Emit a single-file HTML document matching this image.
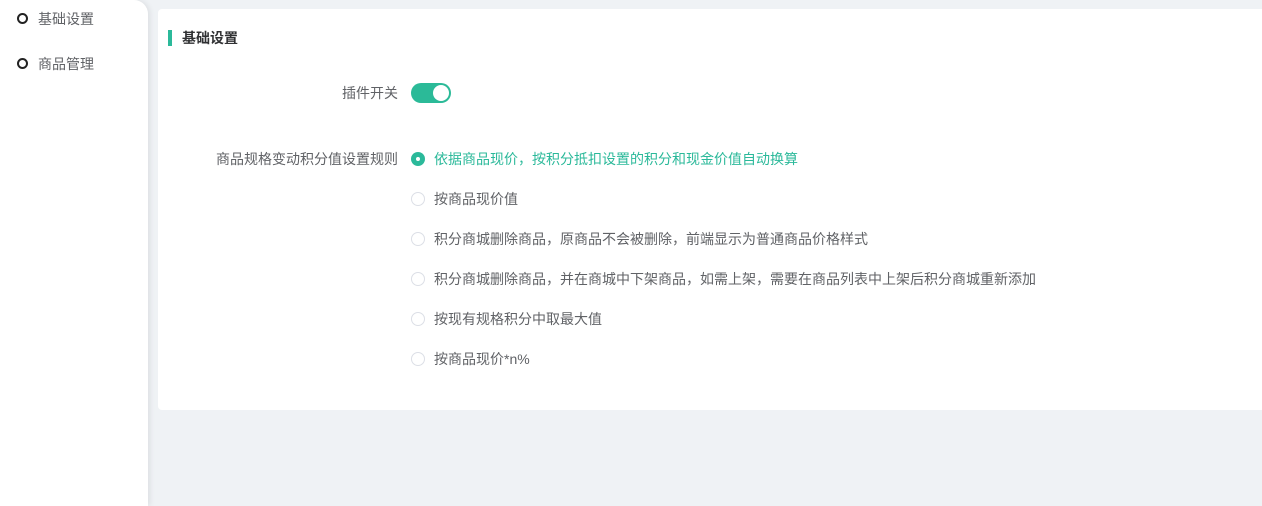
<!DOCTYPE html>
<html><head><meta charset="utf-8"><style>
*{margin:0;padding:0;box-sizing:border-box}
body{width:1262px;height:506px;background:#eff2f5;font-family:"Liberation Sans","Noto Sans CJK SC",sans-serif;font-size:14px;color:#606266;position:relative;overflow:hidden}
.side{position:absolute;left:0;top:0;width:148px;height:506px;background:#fff;border-top-right-radius:14px;box-shadow:2px 0 6px rgba(0,0,0,0.08)}
.mi{position:absolute;left:17px;font-size:14px;color:#606266;height:20px;line-height:20px;padding-left:21px}
.mi:before{content:"";position:absolute;left:0;top:4px;width:11px;height:11px;border:2px solid #222;border-radius:50%;box-sizing:border-box}
.card{position:absolute;left:158px;top:9px;width:1110px;height:401px;background:#fff;border-radius:4px}
.title{position:absolute;left:10px;top:21px;height:16px;border-left:4px solid #2bb99a;padding-left:10px;line-height:16px;font-weight:bold;color:#303133;font-size:14px}
.lbl{position:absolute;right:0;text-align:right;color:#606266}
.sw{position:absolute;left:253px;top:74px;width:40px;height:20px;border-radius:10px;background:#2bba98}
.sw:after{content:"";position:absolute;right:2px;top:2px;width:16px;height:16px;border-radius:50%;background:#fff}
.r{position:absolute;left:253px;height:20px;line-height:20px;padding-left:23px;color:#606266}
.r:before{content:"";position:absolute;left:0;top:3px;width:14px;height:14px;border:1px solid #dcdfe6;border-radius:50%;box-sizing:border-box;background:#fff}
.r.on{color:#2bb99a}
.r.on:before{border:none;background:#2bb99a}
.r.on:after{content:"";position:absolute;left:5px;top:8px;width:4px;height:4px;border-radius:50%;background:#fff}
</style></head><body>
<div class="side">
<div class="mi" style="top:9px">基础设置</div>
<div class="mi" style="top:54px">商品管理</div>
</div>
<div class="card">
<div class="title">基础设置</div>
<div class="lbl" style="left:0;width:240px;top:74px;line-height:20px">插件开关</div>
<div class="sw"></div>
<div class="lbl" style="left:0;width:240px;top:140px;line-height:20px">商品规格变动积分值设置规则</div>
<div class="r on" style="top:140px">依据商品现价，按积分抵扣设置的积分和现金价值自动换算</div>
<div class="r" style="top:180px">按商品现价值</div>
<div class="r" style="top:220px">积分商城删除商品，原商品不会被删除，前端显示为普通商品价格样式</div>
<div class="r" style="top:260px">积分商城删除商品，并在商城中下架商品，如需上架，需要在商品列表中上架后积分商城重新添加</div>
<div class="r" style="top:300px">按现有规格积分中取最大值</div>
<div class="r" style="top:340px">按商品现价*n%</div>
</div>
</body></html>
